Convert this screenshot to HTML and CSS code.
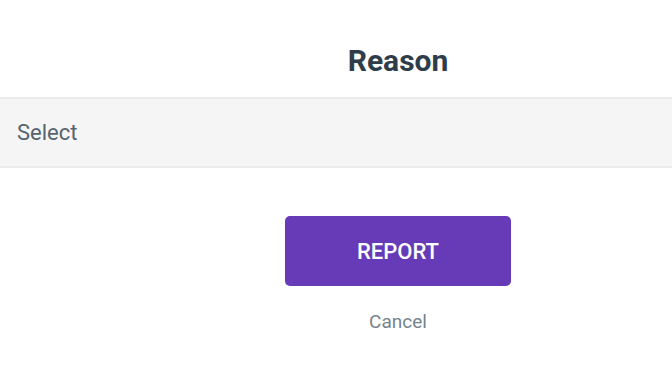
FILE: index.html
```html
<!DOCTYPE html>
<html>
<head>
<meta charset="utf-8">
<link rel="stylesheet" href="styles.css">
</head>
<body>
<div class="sheet">
  <h1 class="title">Reason</h1>
  <div class="select-row">
    <span class="select-label">Select</span>
  </div>
  <div class="actions">
    <button class="report-btn">REPORT</button>
    <button class="cancel-btn">Cancel</button>
  </div>
</div>
</body>
</html>
```
FILE: styles.css
```css
html, body {
  margin: 0;
  padding: 0;
  background: #ffffff;
  font-family: Roboto, "Liberation Sans", sans-serif;
}
.sheet {
  width: 672px;
  height: 378px;
  display: flex;
  flex-direction: column;
}
.title {
  flex-shrink: 0;
  margin: 0;
  padding: 41px 0 16px 124px;
  text-align: center;
  font-size: 30px;
  font-weight: 700;
  line-height: 40px;
  color: #2e3d49;
}
.select-row {
  flex-shrink: 0;
  height: 71px;
  box-sizing: border-box;
  background: #f5f5f5;
  border-top: 2px solid #ebebeb;
  border-bottom: 2px solid #ebebeb;
  display: flex;
  align-items: center;
  padding-left: 17px;
}
.select-label {
  font-size: 22px;
  color: #566470;
}
.actions {
  display: flex;
  flex-direction: column;
  align-items: center;
  padding: 48px 0 0 124px;
}
.report-btn {
  width: 226px;
  height: 70px;
  border: none;
  border-radius: 5px;
  background: #673ab7;
  color: #ffffff;
  font-family: Roboto, "Liberation Sans", sans-serif;
  font-size: 22px;
  font-weight: 500;
  padding: 0;
}
.cancel-btn {
  margin-top: 24px;
  border: none;
  background: none;
  padding: 0;
  font-family: Roboto, "Liberation Sans", sans-serif;
  font-size: 19px;
  color: #75838d;
}
```
